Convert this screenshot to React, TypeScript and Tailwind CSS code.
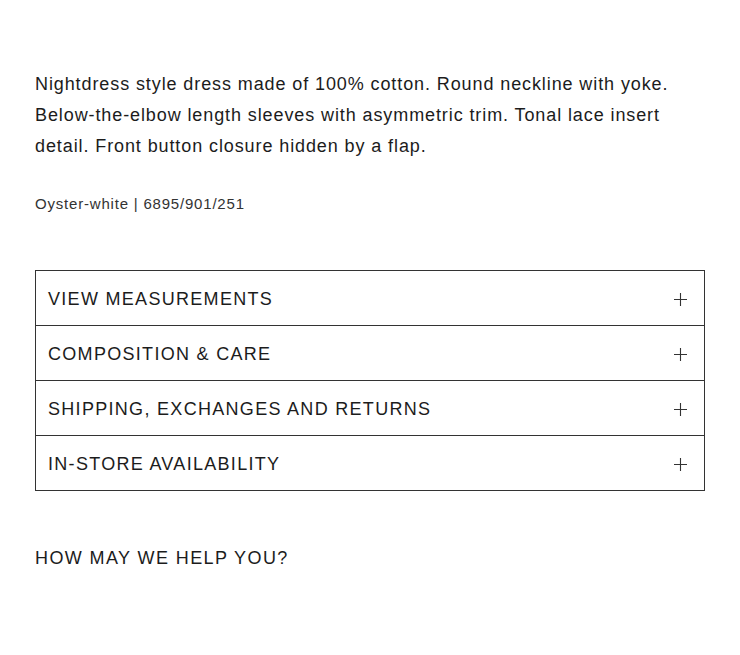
import React from "react";

const items = [
  "VIEW MEASUREMENTS",
  "COMPOSITION & CARE",
  "SHIPPING, EXCHANGES AND RETURNS",
  "IN-STORE AVAILABILITY",
];

function Plus() {
  return (
    <svg width="13" height="13" viewBox="0 0 13 13" className="shrink-0">
      <path d="M6.5 0V13M0 6.5H13" stroke="#333" strokeWidth="1.1" fill="none" />
    </svg>
  );
}

export default function App() {
  return (
    <div
      className="w-[740px] h-[655px] bg-white text-[#1c1c1c] px-[35px] pt-[69px]"
      style={{ fontFamily: '"Liberation Sans", Arial, sans-serif' }}
    >
      <p className="text-[18px] leading-[31px] tracking-[0.9px]">
        Nightdress style dress made of 100% cotton. Round neckline with yoke. Below-the-elbow length sleeves with asymmetric trim. Tonal lace insert detail. Front button closure hidden by a flap.
      </p>
      <p className="mt-[32px] text-[15px] leading-[20px] tracking-[0.8px] text-[#333]">Oyster-white | 6895/901/251</p>
      <div className="mt-[56px] border border-[#333]">
        {items.map((t, i) => (
          <div
            key={t}
            className={`flex items-center justify-between pl-[12px] pr-[17px] pt-[2px] ${i > 0 ? "h-[55px] border-t border-[#333]" : "h-[54px]"}`}
          >
            <span className="text-[18px] tracking-[1.3px]">{t}</span>
            <Plus />
          </div>
        ))}
      </div>
      <p className="mt-[55px] text-[18px] leading-[24px] tracking-[1.4px]">HOW MAY WE HELP YOU?</p>
    </div>
  );
}
